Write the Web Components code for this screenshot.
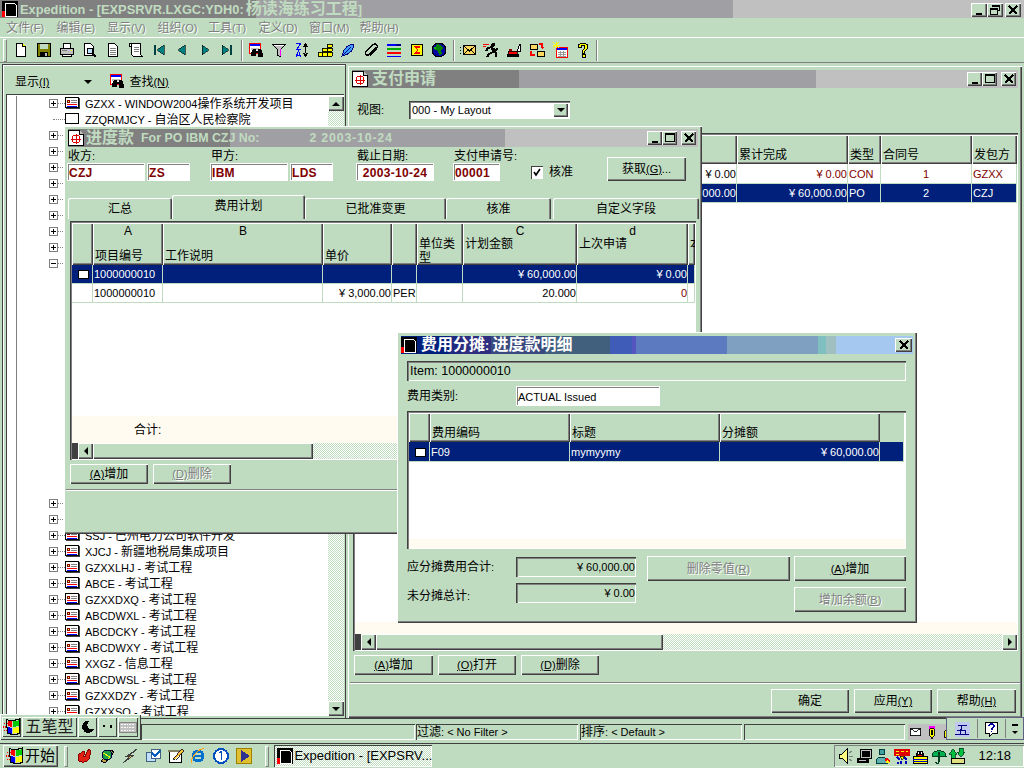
<!DOCTYPE html>
<html lang="zh"><head><meta charset="utf-8"><title>Expedition</title>
<style>
:root{--face:#c0dcc0;--raised:inset 1px 1px 0 #fff,inset -1px -1px 0 #404040,inset -2px -2px 0 #808080;--sunken:inset 1px 1px 0 #404040,inset -1px -1px 0 #fff;}
html,body{margin:0;height:768px;overflow:hidden}
body{position:relative;width:1024px;display:flex;flex-direction:column;background:var(--face);font:11px/14px "Liberation Sans","Noto Sans CJK SC",sans-serif;color:#000}
u{text-decoration:underline}
</style></head><body>
<x-appbar text="Expedition - [EXPSRVR.LXGC:YDH0:杨读海练习工程]"></x-appbar>
<x-menu><span>文件(F)</span><span>编辑(E)</span><span>显示(V)</span><span>组织(O)</span><span>工具(T)</span><span>定义(D)</span><span>窗口(M)</span><span>帮助(H)</span></x-menu>
<x-toolbar></x-toolbar>
<x-workspace>
  <x-nav slot="nav"></x-nav>
  <x-window slot="main" title-text="支付申请" kind="mdi" style="flex:1">
    <x-row style="margin:13px 0 0 7px;height:18px;align-items:center"><span style="width:52px">视图:</span><x-combo style="width:161px">000 - My Layout</x-combo></x-row>
    <x-grid style="margin:14px 2px 0 3px;height:518px" cols="21px 90px 90px 91px 90px 111px 33px 91px 45px" rows="29px 20px 19px" foot="12">
      <x-cell hd></x-cell><x-cell hd></x-cell><x-cell hd></x-cell><x-cell hd></x-cell><x-cell hd></x-cell><x-cell hd>累计完成</x-cell><x-cell hd>类型</x-cell><x-cell hd>合同号</x-cell><x-cell hd>发包方</x-cell>
      <x-cell></x-cell><x-cell></x-cell><x-cell></x-cell><x-cell></x-cell><x-cell align="r">¥ 0.00</x-cell><x-cell align="r" red>¥ 0.00</x-cell><x-cell red>CON</x-cell><x-cell align="c" red>1</x-cell><x-cell red>GZXX</x-cell>
      <x-cell sel mark></x-cell><x-cell sel></x-cell><x-cell sel></x-cell><x-cell sel></x-cell><x-cell sel align="r">¥ 60,000.00</x-cell><x-cell sel align="r">¥ 60,000.00</x-cell><x-cell sel>PO</x-cell><x-cell sel align="c">2</x-cell><x-cell sel>CZJ</x-cell>
      <x-hscroll slot="hs" thumb="287" end></x-hscroll>
    </x-grid>
    <x-row style="margin:4px 0 0 4px;gap:5px"><x-btn style="width:79px;height:20px"><u>(A)</u>增加</x-btn><x-btn style="width:78px;height:20px"><u>(O)</u>打开</x-btn><x-btn style="width:78px;height:20px"><u>(D)</u>删除</x-btn></x-row>
    <x-rule style="margin-top:7px"></x-rule>
    <x-row style="margin:5px 4px 0 0;gap:5px;justify-content:flex-end"><x-btn style="width:78px;height:24px">确定</x-btn><x-btn style="width:78px;height:24px">应用<u>(Y)</u></x-btn><x-btn style="width:79px;height:24px">帮助<u>(H)</u></x-btn></x-row>
  </x-window>
</x-workspace>
<x-status></x-status>
<x-taskbar></x-taskbar>

<x-window kind="mdi" small title-text="进度款" sub="For PO IBM CZJ No:" sub2="2 2003-10-24" style="position:absolute;left:64px;top:126px;width:638px;height:408px;padding-top:3px">
  <x-row style="margin:3px 14px 0 1px;height:31px;align-items:flex-end">
    <x-labeled label="收方:" style="width:123px"><x-input red style="width:78px">CZJ</x-input><x-input red style="width:43px">ZS</x-input></x-labeled>
    <x-labeled label="甲方:" style="width:123px;margin-left:20px"><x-input red style="width:78px">IBM</x-input><x-input red style="width:43px">LDS</x-input></x-labeled>
    <x-labeled label="截止日期:" style="width:78px;margin-left:23px"><x-input red center style="width:78px">2003-10-24</x-input></x-labeled>
    <x-labeled label="支付申请号:" style="width:47px;margin-left:19px"><x-input red style="width:47px">00001</x-input></x-labeled>
    <x-check style="margin:0 0 2px 31px">核准</x-check>
    <x-btn style="width:79px;height:24px;margin-left:auto">获取<u>(G)</u>...</x-btn>
  </x-row>
  <x-row style="margin:14px 0 0 2px;height:24px;align-items:flex-end">
    <x-tab style="width:104px">汇总</x-tab><x-tab active style="width:133px">费用计划</x-tab><x-tab style="width:141px">已批准变更</x-tab><x-tab style="width:105px">核准</x-tab><x-tab style="width:146px;margin-left:2px">自定义字段</x-tab>
  </x-row>
  <x-grid style="margin:2px 4px 0 4px;height:239px" cols="21px 70px 160px 69px 25px 46px 114px 111px 7px" rows="42px 19px 19px" foot="27">
    <x-cell hd></x-cell><x-cell hd top="A">项目编号</x-cell><x-cell hd top="B">工作说明</x-cell><x-cell hd>单价</x-cell><x-cell hd></x-cell><x-cell hd tight>单位类型</x-cell><x-cell hd tight top="C">计划金额</x-cell><x-cell hd tight top="d">上次申请</x-cell><x-cell hd tight top=" ">本</x-cell>
    <x-cell sel mark></x-cell><x-cell sel>1000000010</x-cell><x-cell sel></x-cell><x-cell sel></x-cell><x-cell sel></x-cell><x-cell sel></x-cell><x-cell sel align="r">¥ 60,000.00</x-cell><x-cell sel align="r">¥ 0.00</x-cell><x-cell sel></x-cell>
    <x-cell></x-cell><x-cell>1000000010</x-cell><x-cell></x-cell><x-cell align="r">¥ 3,000.00</x-cell><x-cell>PER</x-cell><x-cell></x-cell><x-cell align="r">20.000</x-cell><x-cell align="r" red>0</x-cell><x-cell></x-cell>
    <span slot="foot" style="position:absolute;left:62px;top:7px;font-size:12px">合计:</span>
    <x-hscroll slot="hs" thumb="220"></x-hscroll>
  </x-grid>
  <x-row style="margin:4px 0 0 4px;gap:5px"><x-btn style="width:78px;height:20px"><u>(A)</u>增加</x-btn><x-btn off style="width:78px;height:20px"><u>(D)</u>删除</x-btn></x-row>
  <x-rule style="margin-top:5px"></x-rule>
</x-window>

<x-window kind="dlg" title-text="费用分摊: 进度款明细" style="position:absolute;left:397px;top:332px;width:520px;height:291px">
  <div style="padding:7px 9px 0 8px">
    <x-field style="height:20px;padding-left:3px;font-size:12.500px">Item: 1000000010</x-field>
    <x-row style="margin-top:5px;height:20px;align-items:center"><span style="width:109px">费用类别:</span><x-input style="width:144px;height:20px">ACTUAL Issued</x-input></x-row>
    <x-grid style="margin-top:5px;height:138px" cols="21px 140px 150px 160px 24px" rows="29px 20px" foot="9">
      <x-cell hd></x-cell><x-cell hd>费用编码</x-cell><x-cell hd>标题</x-cell><x-cell hd>分摊额</x-cell><x-cell plain></x-cell>
      <x-cell sel mark></x-cell><x-cell sel>F09</x-cell><x-cell sel>mymyymy</x-cell><x-cell sel align="r">¥ 60,000.00</x-cell><x-cell sel></x-cell>
    </x-grid>
    <x-dialogfoot style="margin-top:7px">
      <span>应分摊费用合计:</span><x-field right style="height:20px;margin-top:1px">¥ 60,000.00</x-field><x-btn off style="height:25px">删除零值<u>(R)</u></x-btn><x-btn style="height:25px"><u>(A)</u>增加</x-btn>
      <span style="margin-top:-2px">未分摊总计:</span><x-field right style="height:20px;margin-top:-4px">¥ 0.00</x-field><i></i><x-btn off style="height:25px">增加余额<u>(B)</u></x-btn>
    </x-dialogfoot>
  </div>
</x-window>

<x-ime-left style="position:absolute;left:0;top:714px"></x-ime-left>
<x-ime-right style="position:absolute;left:946px;top:717px"></x-ime-right>

<script>
const ICONS={
 app:`<rect width="16" height="16" fill="#000"/><path d="M3 2h9l2 2v11H3z" fill="none" stroke="#fff"/><path d="M0 10h3v6H0z" fill="#f00"/>`,
 new:`<path d="M3.5 1.5h6l3 3v10h-9z" fill="#fff" stroke="#000"/><path d="M9.5 1.5v3h3" fill="#ff0" stroke="#000"/>`,
 save:`<path d="M1.5 1.5h13v13h-13z" fill="#808000" stroke="#000"/><path d="M4 2h8v5H4z" fill="#c0dcc0"/><path d="M4 10h8v5H4z" fill="#000"/><path d="M9 11h2v3H9z" fill="#c0c0c0"/>`,
 print:`<path d="M4.5 1.5h7v5h-7z" fill="#fff" stroke="#000"/><path d="M1.5 6.5h13v6h-13z" fill="#c0c0c0" stroke="#000"/><path d="M3.5 12.5h9v2h-9z" fill="#fff" stroke="#000"/><path d="M3 8h5v1H3z" fill="#808080"/><path d="M12 8h1v1h-1z" fill="#ff0"/>`,
 prev:`<path d="M2.5 1.5h6l3 3v9h-9z" fill="#fff" stroke="#000"/><circle cx="8" cy="9" r="3" fill="#c0e0ff" stroke="#000"/><path d="M10 11l4 4" stroke="#000" stroke-width="2"/>`,
 doc:`<path d="M3.5 1.5h6l3 3v10h-9z" fill="#fff" stroke="#000"/><path d="M5 6h6M5 8h6M5 10h6M5 12h6" stroke="#808080"/>`,
 scroll:`<path d="M3.5 1.5h9v11l2 2h-9l-2-2z" fill="#fff" stroke="#000"/><path d="M1.5 1.5h2v3h-2z" fill="#fff" stroke="#000"/><path d="M6 5h5M6 7h5M6 9h5" stroke="#808080"/>`,
 first:`<path d="M3 3h2v10H3z" fill="#004040"/><path d="M13 3v10L6 8z" fill="#008080" stroke="#000" stroke-width=".6"/>`,
 back:`<path d="M11 3v10L4 8z" fill="#008080" stroke="#000" stroke-width=".6"/>`,
 next:`<path d="M5 3v10l7-5z" fill="#008080" stroke="#000" stroke-width=".6"/>`,
 last:`<path d="M11 3h2v10h-2z" fill="#004040"/><path d="M3 3v10l7-5z" fill="#008080" stroke="#000" stroke-width=".6"/>`,
 find:`<path d="M1.5 1.5h11v10h-11z" fill="#fff" stroke="#f00"/><path d="M2 2h10v2H2z" fill="#00f"/><path d="M3 6h8v2H3z" fill="#c0c0c0"/><path d="M5 7h3v7H3v-3zM10 7h3l2 5v3h-5z" fill="#000"/><path d="M8 9h2v2H8z" fill="#000"/>`,
 filter:`<path d="M1.5 2.5h13l-5 5v7l-3-1v-6z" fill="#c0c0c0" stroke="#000"/><path d="M9 7h1v7H9z" fill="#f0f"/><path d="M3 3h10v1H3z" fill="#fff"/>`,
 sort:`<path d="M2 1h5L3 7h4M2 15l2.500-6 2.500 6M3 13h3" fill="none" stroke="#00f"/><path d="M11.500 1l3 4h-6zM11.500 15l3-4h-6zM11 4h1v8h-1z" fill="#000"/>`,
 coins:`<path d="M10 2h5v3h-5zM10 6h5v3h-5zM10 10h5v4h-5zM5 6h5v3H5zM5 10h5v4H5zM1 10h4v4H1z" fill="#ff0" stroke="#000" stroke-width=".9"/>`,
 feather:`<path d="M14 2C9 2 4 6 3 11l-1 3 3-1c5-1 9-6 9-11z" fill="#40a0ff" stroke="#000080"/><path d="M3 13L11 5" stroke="#000080"/>`,
 clip:`<path d="M13 4.500L6 12a2 2 0 0 1-3-3l7.500-7a2.500 2.500 0 0 1 3.500 3.500L7 13" fill="none" stroke="#000" stroke-width="1.400" transform="translate(0 .5)"/>`,
 lines:`<path d="M1 2h14v2H1z" fill="#00f"/><path d="M1 6h14v2H1z" fill="#0a0"/><path d="M1 10h14v2H1z" fill="#f00"/><path d="M1 14h14v1H1z" fill="#00f"/><path d="M10 2h5v2h-5z" fill="#008"/>`,
 sigma:`<path d="M2.500 2.500h11v11h-11z" fill="#ff0" stroke="#000"/><path d="M11 5H6l3 3-3 3h5" fill="none" stroke="#f00" stroke-width="1.300"/>`,
 globe:`<circle cx="8" cy="8" r="7" fill="#0000a0" stroke="#000"/><path d="M6 2l4 1 2 3-2 2 1 4-3 1-1-4-3-1 1-3z" fill="#008000"/><path d="M3 5h2v2H3z" fill="#00c000"/>`,
 mail:`<path d="M0 5h2M0 8h2M0 11h2" stroke="#000" stroke-dasharray="1 1"/><path d="M3.500 3.500h12v9h-12z" fill="#ffd860" stroke="#000"/><path d="M4 4l5.500 5L15 4M4 12l4-4M15 12l-4-4" fill="none" stroke="#000"/>`,
 run:`<circle cx="10" cy="3" r="2" fill="#000"/><path d="M9 5l-4 1-2 3M9 5l1 5-4 2-2 3M10 9l3 2v4M9 6l3 2 3-1" fill="none" stroke="#000" stroke-width="2"/><path d="M0 2h6M0 4h3" stroke="#f00"/>`,
 crane:`<path d="M2 9h9v3H2z" fill="#f00" stroke="#000" stroke-width=".8"/><path d="M1 12h12v3H1z" fill="#000"/><path d="M11 9l3-7v7z" fill="#fff" stroke="#000"/><path d="M3 7h3v2H3z" fill="#800"/>`,
 folders:`<path d="M1.500 2.500h7v5h-7z" fill="#ffd860" stroke="#000"/><path d="M8.500 9.500h7v5h-7z" fill="#ffd860" stroke="#000"/><path d="M10 2h3v3M2 9v4h4" fill="none" stroke="#f00" stroke-width="1.500"/><path d="M11 5h4l-2 2zM4 13l2-2v3z" fill="#f00"/>`,
 cal:`<path d="M4.500 5.500h11v10h-11z" fill="#fff" stroke="#f00"/><path d="M5 6h10v2H5z" fill="#00f"/><path d="M6 10h8M6 12h8M6 14h8M8 9v6M11 9v6" stroke="#999"/><path d="M4 0v6M1 3h7M1 0l6 6M7 0L1 6" stroke="#ff0"/>`,
 help:`<path d="M3 5c0-5 10-5 10 0 0 3-4 3-4 6H7c0-4 3-4 3-6s-4-2-4 0z" fill="#ff0" stroke="#000"/><path d="M7 12.500h3v3H7z" fill="#ff0" stroke="#000"/>`,
 card:`<path d="M.5 .5h13v10h-13z" fill="#fff" stroke="#000"/><path d="M1 11.500h14M14.500 1v11" stroke="#404040"/><path d="M6 3h6M6 5h6" stroke="#808080"/><path d="M2 7h10v1H2z" fill="#f00"/><path d="M2 9h10v1H2z" fill="#00f"/><path d="M2 3h3v3H2z" fill="#800"/><path d="M3 4h1v1H3z" fill="#ff0"/>`,
 blank:`<path d="M.5 .5h13v10h-13z" fill="#fff" stroke="#000"/>`,
 win:`<path d="M1 5h3M0 8h3M1 11h3" stroke="#f00" stroke-dasharray="1 1"/><path d="M4 2l4 1v5l-4-1z" fill="#f00"/><path d="M9 3l5-1v5l-5 1z" fill="#0c0"/><path d="M4 8l4 1v5l-4-1z" fill="#00f"/><path d="M9 9l5-1v5l-5 1z" fill="#ff0"/><path d="M3 1.500l5 1 6.500-1.500v13L9 15l-5-1.500z" fill="none" stroke="#000"/>`,
 q1:`<path d="M13 1l2 2-2 8c-3 4-9 4-11 1l1-6 5-3 1 3-2 2 2 1 1-3z" fill="#e02010" stroke="#800"/>`,
 q2:`<path d="M2 13L12 2l3 2-9 11z" fill="#c0a040" stroke="#000"/><circle cx="8" cy="7" r="5" fill="#20a040" stroke="#004"/><path d="M4 5l7 4-2 2" fill="none" stroke="#ff0"/>`,
 q3:`<path d="M15 1L5 8h3l-7 7 11-8H8z" fill="#ffc040" stroke="#404040"/>`,
 q4:`<path d="M1.500 4.500h9v9h-9z" fill="#c0e0ff" stroke="#406080"/><path d="M6 1.500h9v9H6z" fill="#fff" stroke="#406080"/><path d="M7 5l3 3 5-5" fill="none" stroke="#0060c0" stroke-width="2"/>`,
 q5:`<path d="M1.500 3.500h12v11h-12z" fill="#fff" stroke="#000"/><path d="M0 2h12v2H0z" fill="#808060"/><path d="M5 11L14 1l1.500 1.500L7 12z" fill="#ffc040" stroke="#000" stroke-width=".8"/>`,
 q6:`<circle cx="8" cy="8" r="5" fill="none" stroke="#0070d0" stroke-width="3"/><path d="M4 8h10" stroke="#0070d0" stroke-width="2"/><path d="M14 1C10 0 2 7 1 15" fill="none" stroke="#ffa000"/>`,
 q7:`<circle cx="8" cy="8" r="7" fill="#fff" stroke="#0050c0" stroke-width="2"/><path d="M6.500 5l2-1v8" fill="none" stroke="#0050c0" stroke-width="1.800"/>`,
 q8:`<path d="M.5 .5h15v15H.5z" fill="#e0c030" stroke="#a08000"/><path d="M5 2v12l9-6z" fill="#303090"/>`,
 spk:`<path d="M1 6h3l5-5v14l-5-5H1z" fill="#ffff80" stroke="#000"/><path d="M11 5l3-2M11 8h4M11 11l3 2" stroke="#808080"/>`,
 pc:`<path d="M3.500 1.500h11v9h-11z" fill="#c0c0c0" stroke="#000"/><path d="M5 3h8v6H5z" fill="#000"/><path d="M0 10h12v5H0z" fill="#000"/><path d="M2 12h7v1H2z" fill="#c0c0c0"/>`,
 usr:`<circle cx="7" cy="4" r="3" fill="#40a0a0" stroke="#004040"/><path d="M1 14c0-6 9-6 11-2v3H1z" fill="#60b0b0" stroke="#004040"/><path d="M9 12l3-3 3 4-2 2z" fill="#f00"/><path d="M12 12l3 3h-4z" fill="#ff0"/>`,
 sos:`<path d="M0 1h16v7H0z" fill="#e00000"/><path d="M2 3h3M7 3h3M12 3h2M2 6h3" stroke="#ff0"/><path d="M3 9l3 3M10 9l3 3M3 15h2M7 13v3M12 13v3" stroke="#0000c0" stroke-width="2"/><path d="M6 8h5l-3 4z" fill="#ff0" stroke="#000" stroke-width=".7"/>`,
 qq:`<path d="M4 7C4 1 12 1 12 7v2H4z" fill="#000"/><path d="M6 4h1v2H6zM9 4h1v2H9z" fill="#fff"/><path d="M6 7h4v1H6z" fill="#f00"/><path d="M1 8.500h14v7H1z" fill="#ff0" stroke="#000"/><path d="M1 11h14M1 13h14" stroke="#00c"/>`,
 umb:`<path d="M1 8C1 1 15 1 15 8z" fill="#00b050" stroke="#004020"/><path d="M8 4v10c0 2-3 2-3 0" fill="none" stroke="#004020" stroke-width="1.300"/>`,
 arr:`<path d="M4 1L0 6h2v4h4V6h2z" fill="#00c040" stroke="#004020" stroke-width=".8"/><path d="M12 9l-4-5h2V0h4v4h2z" fill="#00c040" stroke="#004020" stroke-width=".8"/><path d="M2 10h13v5H2z" fill="#e0e080" stroke="#000"/>`,
 env:`<path d="M1.500 3.500h12v9h-12z" fill="#fff" stroke="#000"/><path d="M2 4l5.500 4L13 4" fill="none" stroke="#000"/>`,
 pen:`<path d="M5 1h6v3H5z" fill="#f0f"/><path d="M5.500 4.500h5v8l-2.500 3-2.500-3z" fill="#ff0" stroke="#000"/><path d="M7 6h2v5H7z" fill="#000"/>`,
 lock:`<path d="M4.500 6.500h9v8h-9z" fill="#ff0" stroke="#000"/><path d="M6 6c0-6 6-6 6 0" fill="none" stroke="#000" stroke-width="1.500"/>`,
 wu:`<rect x=".5" y=".5" width="15" height="15" fill="#c0c8f0"/><path d="M1 13h14M4 4h9M3 9h8M8 4l-2 9M11 9v4" fill="none" stroke="#000080"/>`,
 hq:`<path d="M1.500 1.500h12v11h-5l-3 3v-3h-4z" fill="#fff" stroke="#000"/><path d="M5 5c0-3 5-3 5 0 0 2-2 2-2 3v1M7.500 10v1" fill="none" stroke="#0000a0" stroke-width="1.500"/>`,
 moon:`<path d="M10 1A7 7 0 1 0 15 10 5 5 0 0 1 10 1z" fill="#000"/>`,
 punc:`<path d="M3 6h2v2H3zM10 6h2v3h-2z" fill="#000"/>`,
 kb:`<rect x=".5" y="2.500" width="18" height="11" fill="#c0c0c0" stroke="#808080"/><path d="M2 5h15M2 8h15M2 11h15" stroke="#fff" stroke-dasharray="2 1"/>`
};
function def(name,css,html){
  customElements.define(name,class extends HTMLElement{
    constructor(){super();this.attachShadow({mode:'open'})}
    connectedCallback(){ if(this._d)return; this._d=1; this.shadowRoot.innerHTML=`<style>${css}</style>`+(typeof html==='function'?html(this):(html||'<slot></slot>'));}
  });
}
const icon=(n,w=16,h=16)=>`<x-icon name="${n}" style="width:${w}px;height:${h}px"></x-icon>`;
const attr=(e,n,d='')=>e.hasAttribute(n)?e.getAttribute(n):d;
def('x-icon',`:host{display:inline-block;flex:none}svg{display:block;width:100%;height:100%}`,
  e=>{const n=e.getAttribute('name'),w=n==='kb'?19:(n==='card'||n==='blank')?15:16,h=(n==='card'||n==='blank')?13:16;return `<svg viewBox="0 0 ${w} ${h}" shape-rendering="crispEdges" aria-hidden="true">${ICONS[n]||''}</svg>`});
def('x-row',`:host{display:flex}`);
def('x-rule',`:host{display:block;height:0;border-top:1px solid #808080;border-bottom:1px solid #fff}`);
def('x-capbtn',`:host{display:inline-flex;width:16px;height:14px;background:var(--face);box-shadow:var(--raised);align-items:center;justify-content:center;flex:none}svg{display:block}`,
  e=>{const k=e.getAttribute('k');const p={min:'<path d="M3 9h6v2H3z"/>',max:'<path d="M1.500 1.500h9v8h-9z" fill="none" stroke="#000"/><path d="M1 1h10v2H1z"/>',res:'<path d="M3.500 1.500h7v5h-2M1.500 4.500h7v6h-7z" fill="none" stroke="#000"/><path d="M3 1h8v1.500H3zM1 4h8v1.500H1z"/>',cls:'<path d="M2 2l8 8M10 2l-8 8" stroke="#000" stroke-width="1.500" fill="none"/>'}[k];return `<svg width="12" height="12" viewBox="0 0 12 12" shape-rendering="crispEdges">${p}</svg>`});
def('x-appbar',`:host{display:flex;height:18px;align-items:center;flex:none;background:linear-gradient(90deg,#808080 256px,#a0a0a4 256px,#a0a0a4 733px,#c0c0c0 733px);color:#c0dcc0;font:bold 12.800px/18px "Liberation Sans","Noto Sans CJK SC",sans-serif;--cjk:16px;padding-left:2px;box-sizing:border-box}
  span{margin-left:2px;white-space:nowrap;flex:1}x-capbtn{margin-top:1px}.g{width:2px}`,
  e=>`${icon('app')}<span>${e.getAttribute('text')}</span><x-capbtn k="min"></x-capbtn><x-capbtn k="res"></x-capbtn><i class="g"></i><x-capbtn k="cls"></x-capbtn><i class="g" style="width:3px"></i>`);
def('x-menu',`:host{display:flex;height:20px;flex:none;box-sizing:border-box;padding:3px 0 0 6px;border-bottom:1px solid #fff;gap:12px;color:#808080;text-shadow:1px 1px 0 #fff}::slotted(span){width:38.500px;white-space:nowrap}`);
def('x-toolbar',`:host{display:flex;height:25px;flex:none;align-items:center;box-sizing:border-box;padding-left:3px;border-bottom:1px solid #808080}
  .grip{width:2px;height:21px;border:1px solid;border-color:#fff #808080 #808080 #fff;margin-right:3px;background:var(--face)}
  .c{width:22.900px;display:flex;justify-content:center;flex:none}.s{width:6px;flex:none;height:21px;position:relative}.s:before{content:"";position:absolute;left:2px;top:0;bottom:0;width:1px;background:#808080;border-right:1px solid #fff}`,
  ()=>{const g=a=>a.map(n=>`<div class="c">${icon(n)}</div>`).join('');return `<div class="grip"></div>${g(['new','save','print','prev','doc','scroll','first','back','next','last'])}<div class="s"></div>${g(['find','filter','sort','coins','feather','clip','lines','sigma','globe'])}<div class="s"></div>${g(['mail','run','crane','folders','cal','help'])}<div class="s"></div>`});
def('x-workspace',`:host{display:flex;flex:1;min-height:0;border-bottom:1px solid #404040}.n{width:346px;flex:none;display:flex}.m{flex:1;min-width:0;display:flex;padding:3px 2px 0 2px}`,
  `<div class="n"><slot name="nav"></slot></div><div class="m"><slot name="main"></slot></div>`);
def('x-nav',`:host{flex:1;display:flex;flex-direction:column;margin:1px 0 0 2px;box-shadow:inset 1px 1px 0 #404040,inset -1px 0 0 #404040,inset 2px 2px 0 #fff;min-height:0}
  .h{height:30px;display:flex;align-items:center;padding:6px 0 0 13px;flex:none;box-sizing:border-box}.a{margin-left:35px;border:4px solid transparent;border-top-color:#000;border-bottom:0;width:0;height:0}.f{margin-left:17px;margin-right:4px}
  .w{flex:1;margin:0 2px 2px 4px;min-height:0;box-shadow:inset 1px 1px 0 #404040;padding:2px 0 0 1px;background:#fff;display:flex;overflow:hidden}
  .t{flex:1;overflow:hidden;background:linear-gradient(#808080,#808080) 9px 0/1px 100% no-repeat}
  .sb{width:16px;flex:none;display:flex;flex-direction:column;background:conic-gradient(#fff 25%,var(--face) 0 50%,#fff 0 75%,var(--face) 0) 0 0/2px 2px}.b{height:15px;background:var(--face);box-shadow:var(--raised);display:flex;align-items:center;justify-content:center}.sp{flex:1}.u{border:4px solid transparent;border-bottom-color:#000;border-top:0;width:0}.d{border:4px solid transparent;border-top-color:#000;border-bottom:0;width:0}`,
  ()=>{const L=[['GZXX - WINDOW2004操作系统开发项目','card'],['ZZQRMJCY - 自治区人民检察院','blank',1]];
    for(let i=0;i<23;i++){L.push(i<9?['','',i==8?2:0]:['','',3])}
    L.push(['','']);L.push(['','']);
    ['SSJ - 巴州电力公司软件开发','XJCJ - 新疆地税局集成项目','GZXXLHJ - 考试工程','ABCE - 考试工程','GZXXDXQ - 考试工程','ABCDWXL - 考试工程','ABCDCKY - 考试工程','ABCDWXY - 考试工程','XXGZ - 信息工程','ABCDWSL - 考试工程','GZXXDZY - 考试工程','GZXXSQ - 考试工程'].forEach(x=>L.push([x,'card']));
    return `<div class="h"><span>显示<u>(I)</u></span><i class="a"></i><span class="f">${icon('find')}</span><span>查找<u>(N)</u></span></div>
    <div class="w"><div class="t">${L.map(r=>`<x-tree-row text="${r[0]}" ic="${r[1]}" k="${r[2]||0}"></x-tree-row>`).join('')}</div><div class="sb"><div class="b"><i class="u"></i></div><div class="sp"></div><div class="b"><i class="d"></i></div></div></div>`});
def('x-tree-row',`:host{display:flex;height:16px;align-items:center;position:relative;white-space:nowrap}
  .x{position:absolute;left:42px;top:3px;width:9px;height:9px;box-sizing:border-box;border:1px solid #808080;background:#fff}
  .x:before{content:"";position:absolute;left:1px;right:1px;top:3px;height:1px;background:#000}.x.p:after{content:"";position:absolute;top:1px;bottom:1px;left:3px;width:1px;background:#000}
  .l{position:absolute;left:51px;top:7px;width:7px;border-top:1px dotted #808080}.l.w{left:46px;width:12px}
  .i{position:absolute;left:58px;top:1px}.t{position:absolute;left:78px;top:1px}`,
  e=>{const k=+attr(e,'k'),ic=attr(e,'ic'),t=attr(e,'text');if(k===3)return '';return `${k===1?'<i class="l w"></i>':`<i class="x ${k===2?'':'p'}"></i><i class="l"></i>`}${ic?`<span class="i">${icon(ic,15,13)}</span>`:''}<span class="t">${t}</span>`});
def('x-window',`:host{display:flex;flex-direction:column;box-sizing:border-box;background:var(--face);padding:4px 2px 2px 2px;box-shadow:inset 1px 1px 0 #fff,inset -1px -1px 0 #404040,inset -2px -2px 0 #808080;min-width:0}
  .t{height:18px;flex:none;display:flex;align-items:center;margin:0 2px;white-space:nowrap;overflow:hidden;font:bold 12.400px/18px "Liberation Sans","Noto Sans CJK SC",sans-serif;--cjk:16px;color:#c0dcc0}
  .t b{margin-left:4px;font-weight:bold;flex:none}:host([small]) .t b{margin-left:2px}.s{margin-left:7px}.s2{margin-left:50px;letter-spacing:.8px}.sp{flex:1}x-capbtn{width:15px}.g{width:4px}.e{width:2px}
  .dlg{color:#fff;background:linear-gradient(90deg,#00207c 0 48px,#1e2a80 48px 60px,#2e2f80 60px 90px,#3a4a7e 90px 144px,#40607e 144px 209px,#3f5db8 209px 231px,#5555c0 231px 235px,#5c7abf 235px 326px,#7fa0c0 326px 417px,#7fbfc0 417px 425px,#9fbfc0 425px 435px,#a5c8f0 435px)}
  .mdi{background:linear-gradient(90deg,#808080 var(--d,167px),#a0a0a4 var(--d,167px),#a0a0a4 var(--e,464px),#c0c0c0 var(--e,464px))}
  .ic{width:16px;height:16px;flex:none}`,
  e=>{const dlg=attr(e,'kind')==='dlg';
    const ti=dlg?icon('app'):`<svg class="ic" viewBox="0 0 16 16" shape-rendering="crispEdges"><path d="M.5 .5h11l4 4v11H.5z" fill="#fff" stroke="#000"/><path d="M11.500 .5v4h4" fill="#c0c0c0" stroke="#000"/><circle cx="8" cy="9" r="4" fill="none" stroke="#d00"/><path d="M3 9h10M8 4v10" stroke="#d00"/></svg>`;
    const dvars=e.hasAttribute('small')?'--d:162px;--e:437px':'';
    return `<div class="t ${dlg?'dlg':'mdi'}" style="${dvars}">${ti}<b>${attr(e,'title-text')}</b>${attr(e,'sub')?`<span class="s">${attr(e,'sub')}</span><span class="s2">${attr(e,'sub2')}</span>`:''}<i class="sp"></i>${dlg?'<x-capbtn k="cls" style="width:17px"></x-capbtn><i class="g" style="width:1px"></i>':'<x-capbtn k="min"></x-capbtn><x-capbtn k="max"></x-capbtn><i class="g"></i><x-capbtn k="cls"></x-capbtn><i class="e"></i>'}</div><slot></slot>`});
def('x-combo',`:host{display:flex;height:18px;box-sizing:border-box;background:#fff;box-shadow:inset 1px 1px 0 #404040,inset 2px 2px 0 #808080,inset -1px -1px 0 #fff;align-items:center;padding:0 2px 0 3px}
  .t{flex:1}.b{width:15px;height:14px;background:var(--face);box-shadow:var(--raised);display:flex;align-items:center;justify-content:center}i{border:4px solid transparent;border-top-color:#000;border-bottom:0}`,
  `<span class="t"><slot></slot></span><span class="b"><i></i></span>`);
def('x-grid',`:host{display:block;box-sizing:border-box}
  .f{height:100%;box-sizing:border-box;box-shadow:inset 1px 1px 0 #404040,inset 2px 2px 0 #808080,inset -1px -1px 0 #fff;padding:2px 1px 1px 2px;display:flex;flex-direction:column}
  .c{display:grid;background:#fff;flex:none;overflow:hidden}.w{flex:1;background:#fff}.ft{background:#fffbf0;position:relative;flex:none;font-size:12px}`,
  e=>`<div class="f"><div class="c" style="grid-template-columns:${attr(e,'cols')};grid-template-rows:${attr(e,'rows')}"><slot></slot></div><div class="w"></div><div class="ft" style="height:${attr(e,'foot','0')}px"><slot name="foot"></slot></div><slot name="hs"></slot></div>`);
def('x-cell',`:host{display:flex;position:relative;box-sizing:border-box;overflow:hidden;white-space:nowrap;align-items:center;padding:0 1px;border-right:1px solid var(--face);border-bottom:1px solid var(--face);min-width:0}
  :host([sel]){background:#00207c;color:#fff}:host([red]){color:#800000}:host([align=r]){justify-content:flex-end;padding-right:0}:host([align=c]){justify-content:center}
  :host([hd]){background:var(--face);box-shadow:var(--raised);border:0;align-items:flex-end;padding:0 3px 2px 2px;white-space:normal}
  :host([hd][tight]){align-items:flex-start;padding-top:14px}:host([plain]){background:var(--face);border:0}
  .top{position:absolute;left:0;right:0;top:1px;text-align:center;font-size:12px}.m{display:block;width:9px;height:7px;background:#fff;border:1px solid #000;margin:1px 0 0 5px}`,
  e=>`${e.hasAttribute('top')?`<span class="top">${attr(e,'top')}</span>`:''}${e.hasAttribute('mark')?'<i class="m"></i>':''}<span style="${e.hasAttribute('hd')?'line-height:14px':''}"><slot></slot></span>`);
def('x-hscroll',`:host{display:flex;height:16px;flex:none}.d{width:6px;background:#404040}.b{width:15px;background:var(--face);box-shadow:var(--raised);display:flex;align-items:center;justify-content:center;flex:none}
  .l{border:4px solid transparent;border-right-color:#000;border-left:0}.r{border:4px solid transparent;border-left-color:#000;border-right:0}.th{background:var(--face);box-shadow:var(--raised);flex:none}.p{flex:1;background:conic-gradient(#fff 25%,var(--face) 0 50%,#fff 0 75%,var(--face) 0) 0 0/2px 2px}`,
  e=>`<div class="d"></div><div class="b"><i class="l"></i></div><div class="th" style="width:${attr(e,'thumb')}px"></div><div class="p"></div>${e.hasAttribute('end')?'<div class="b"><i class="r"></i></div>':''}`);
def('x-btn',`:host{display:inline-flex;align-items:center;justify-content:center;box-sizing:border-box;background:var(--face);box-shadow:var(--raised);flex:none;white-space:nowrap}:host([off]){color:#808080;text-shadow:1px 1px 0 #fff}`);
def('x-input',`:host{display:flex;align-items:center;height:18px;box-sizing:border-box;background:#fff;box-shadow:inset 1px 1px 0 #404040,inset 2px 2px 0 #808080;outline:1px solid #fff;outline-offset:-1px;padding:1px 2px 0;flex:none;white-space:nowrap;overflow:hidden}
  :host([red]){color:#800000;font-weight:bold;font-size:12px;letter-spacing:.3px}:host([center]){justify-content:center}`);
def('x-labeled',`:host{display:block;flex:none}.l{display:block;height:13px;line-height:13px;white-space:nowrap;margin-left:1px}.r{display:flex;justify-content:space-between}`,
  e=>`<span class="l">${attr(e,'label')}</span><div class="r"><slot></slot></div>`);
def('x-check',`:host{display:inline-flex;align-items:center;gap:6px;white-space:nowrap}.b{width:12px;height:13px;box-sizing:border-box;background:#fff;box-shadow:inset 1px 1px 0 #404040,inset -1px -1px 0 #fff}svg{display:block}`,
  `<span class="b"><svg width="12" height="13" viewBox="0 0 12 13"><path d="M3 6l2 3 4-6" fill="none" stroke="#000" stroke-width="1.600"/></svg></span><slot></slot>`);
def('x-tab',`:host{display:flex;align-items:center;justify-content:center;box-sizing:border-box;height:21px;background:var(--face);box-shadow:inset 1px 1px 0 #fff,inset -1px 0 0 #404040,inset -2px 0 0 #808080;border-radius:2px 2px 0 0;flex:none}
  :host([active]){height:24px;padding-bottom:3px}`);
def('x-field',`:host{display:flex;align-items:center;box-sizing:border-box;box-shadow:inset 1px 1px 0 #404040,inset 2px 2px 0 #808080,inset -1px -1px 0 #fff;white-space:nowrap}:host([right]){justify-content:flex-end;padding-right:1px}`);
def('x-dialogfoot',`:host{display:grid;grid-template-columns:109px 120px 158px 112px;row-gap:6px;grid-auto-rows:25px;align-items:start}
  ::slotted(span){line-height:22px}::slotted(x-btn:nth-of-type(1)){margin-left:11px;width:143px}`);
def('x-status',`:host{display:flex;height:24px;flex:none;align-items:flex-start;padding-top:5px;box-sizing:border-box;position:relative}
  .f{height:16px;box-sizing:border-box;box-shadow:inset 1px 1px 0 #404040,inset -1px -1px 0 #fff;display:flex;align-items:center;padding-left:1px;flex:none;white-space:nowrap}.i{width:16px;height:16px;display:flex;align-items:center;justify-content:center;background:#c0c0c0;flex:none}`,
  `<div class="f" style="width:274px;margin-left:141px"></div><div class="f" style="width:162px;margin-left:1px">过滤: &lt; No Filter &gt;</div><div class="f" style="width:162px;margin-left:2px">排序: &lt; Default &gt;</div><div class="f" style="width:161px;margin-left:2px"></div><div class="i" style="margin-left:3px">${icon('env',14,14)}</div><div class="i">${icon('pen',14,14)}</div><div class="i">${icon('lock',14,14)}</div>`);
def('x-taskbar',`:host{display:flex;height:25px;flex:none;align-items:center;box-sizing:border-box;padding:0 0 0 3px;border-top:1px solid #404040;font-size:13px}
  .st{width:55px;height:22px;display:flex;align-items:center;background:var(--face);box-shadow:var(--raised);padding-left:3px;box-sizing:border-box;gap:1px;--cjk:15px}
  .g{width:2px;height:19px;border:1px solid;border-color:#fff #808080 #808080 #fff;flex:none;background:var(--face)}.c{width:22.800px;display:flex;justify-content:center;flex:none}
  .tk{width:158px;height:22px;box-sizing:border-box;display:flex;align-items:center;gap:1px;padding-left:3px;box-shadow:var(--sunken);background:conic-gradient(#fff 25%,var(--face) 0 50%,#fff 0 75%,var(--face) 0) 0 0/2px 2px;white-space:nowrap}
  .tr{margin-left:auto;width:190px;height:22px;box-sizing:border-box;box-shadow:inset 1px 1px 0 #808080,inset -1px -1px 0 #fff;display:flex;align-items:center;padding-left:3px;flex:none}.tr span{width:18.500px;display:flex;justify-content:center;flex:none}.tr .ck{margin-left:12px;width:auto}`,
  ()=>`<div class="st">${icon('win',18,18)}<span>开始</span></div><div class="g" style="margin-left:6px;margin-right:5px"></div>${['q1','q2','q3','q4','q5','q6','q7','q8'].map(n=>`<div class="c">${icon(n)}</div>`).join('')}<div class="g" style="margin-left:10px;margin-right:5px"></div><div class="tk">${icon('app')}<span>Expedition - [EXPSRV...</span></div><div class="tr">${['spk','pc','usr','sos','qq','umb','arr'].map(n=>`<span>${icon(n)}</span>`).join('')}<span class="ck">12:18</span></div>`);
def('x-ime-left',`:host{display:flex;width:141px;height:26px;box-sizing:border-box;background:var(--face);box-shadow:inset 1px 1px 0 #fff,inset -1px -1px 0 #404040;padding:3px 2px;gap:1px;align-items:stretch}
  div{background:var(--face);box-shadow:inset 1px 1px 0 #fff,inset -1px -1px 0 #404040;display:flex;align-items:center;justify-content:center;flex:none}.w{font-size:16px;--cjk:16px}`,
  ()=>`<div style="width:19px">${icon('win',18,18)}</div><div class="w" style="width:55px;color:#202020">五笔型</div><div style="width:19px">${icon('moon',14,14)}</div><div style="width:19px">${icon('punc')}</div><div style="width:20px">${icon('kb',18,15)}</div>`);
def('x-ime-right',`:host{display:flex;width:78px;height:23px;box-sizing:border-box;background:var(--face);border:1px solid #606080;align-items:center}
  .c{display:flex;justify-content:center;align-items:center;height:19px;border-right:1px solid #808080;flex:none}`,
  ()=>`<div class="c" style="width:30px">${icon('wu')}</div><div class="c" style="width:27px">${icon('hq')}</div><div style="flex:1;display:flex;flex-direction:column;align-items:center;gap:5px"><i style="display:block;width:6px;height:2px;background:#000"></i><i style="display:block;border:3px solid transparent;border-top-color:#000;border-bottom:0"></i></div>`);

/* CJK runs are drawn one pixel larger than the Latin text, as on the bitmap-font original */
const CJK=/[\u3000-\u9fff\uff00-\uff60]+/g;
function walk(root){
  const w=document.createTreeWalker(root,NodeFilter.SHOW_TEXT),n=[];let t;
  while(t=w.nextNode()){const p=t.parentNode;if(p&&/^(STYLE|SCRIPT|TITLE)$/.test(p.nodeName))continue;if(/[\u3000-\u9fff]/.test(t.data))n.push(t)}
  n.forEach(x=>{const f=document.createDocumentFragment();let i=0;x.data.replace(CJK,(m,o)=>{f.append(x.data.slice(i,o));const s=document.createElement('span');s.style.fontSize='var(--cjk,12px)';s.textContent=m;f.append(s);i=o+m.length;return m});f.append(x.data.slice(i));x.replaceWith(f)});
  root.querySelectorAll('*').forEach(e=>{if(e.shadowRoot)walk(e.shadowRoot)});
}
walk(document.body);
</script>
</body></html>
